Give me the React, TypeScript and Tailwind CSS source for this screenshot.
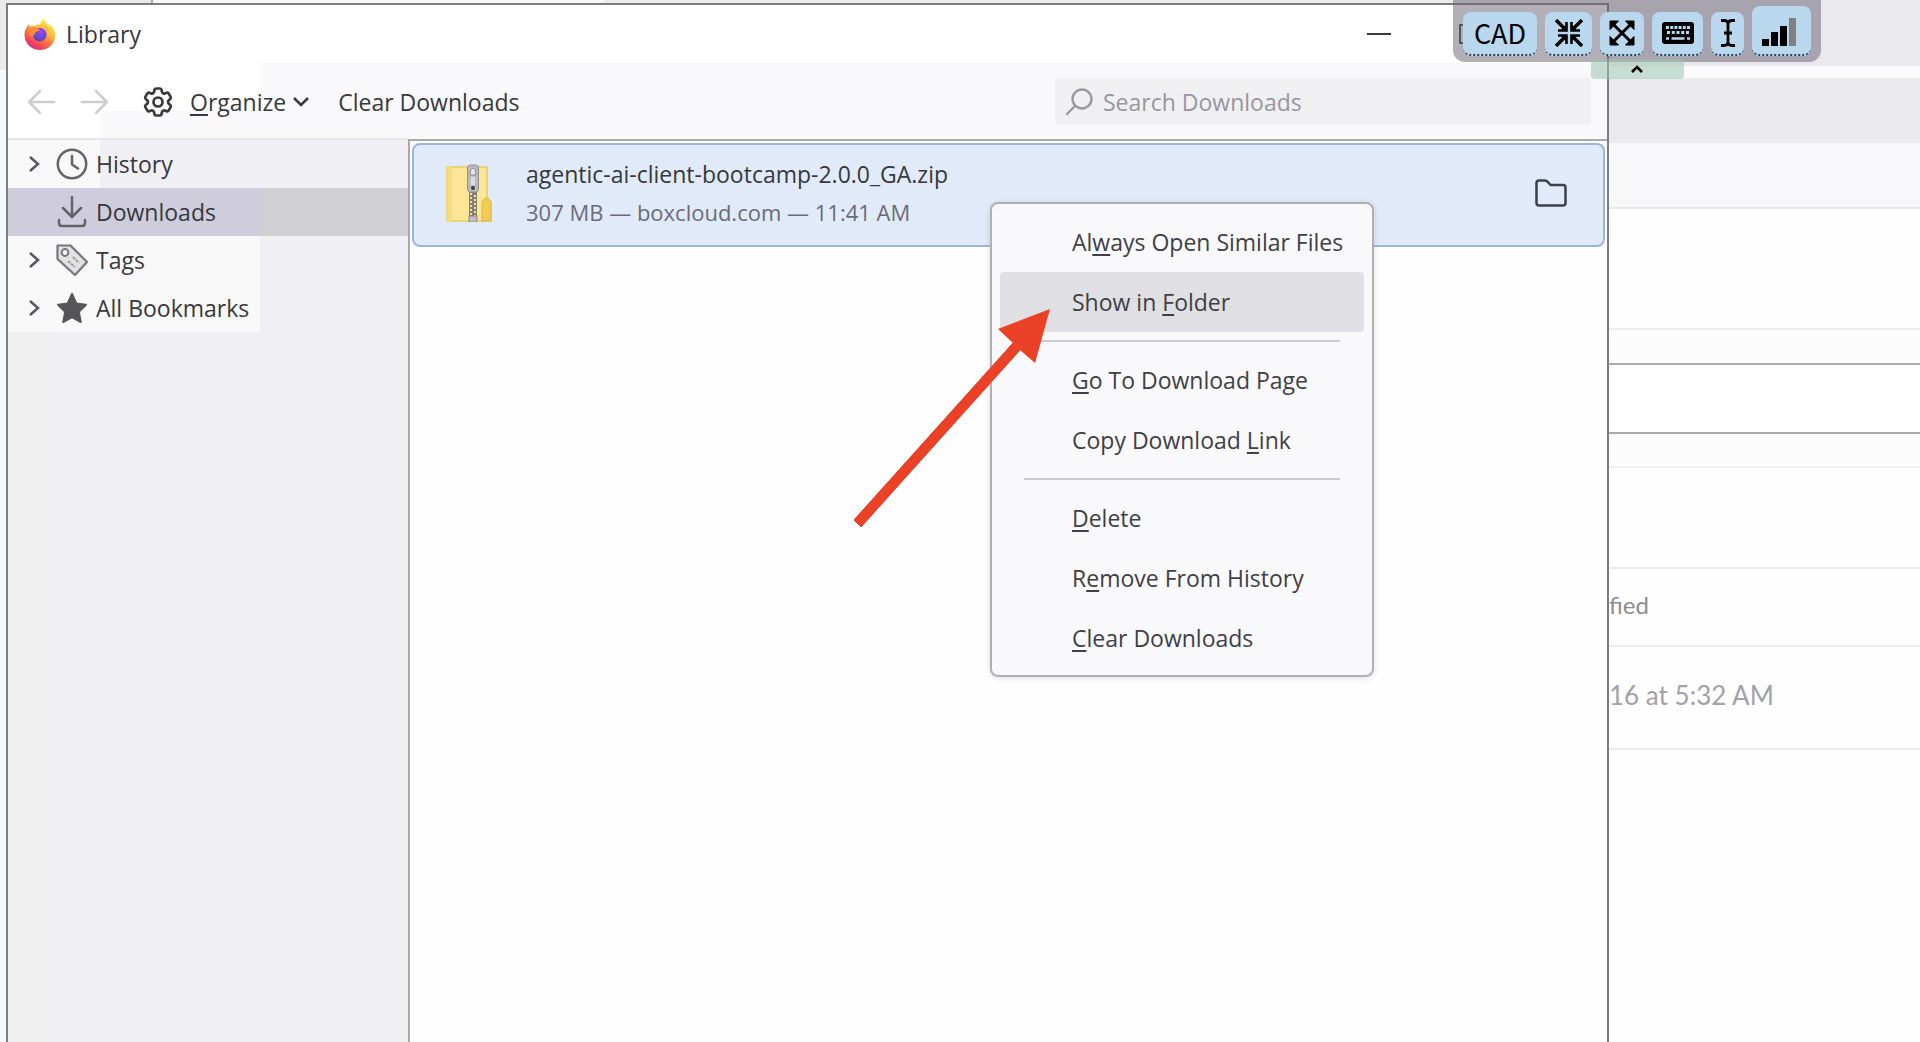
import type { ReactNode } from "react";
import { HiOutlineCog6Tooth } from "react-icons/hi2";

function FirefoxLogo() {
  return (
    <svg viewBox="0 0 32 32" className="size-8 shrink-0" aria-hidden="true">
      <defs>
        <linearGradient id="flame" x1="0.85" y1="0.05" x2="0.3" y2="1">
          <stop offset="0" stopColor="#fff36b" />
          <stop offset="0.35" stopColor="#ffc43c" />
          <stop offset="0.6" stopColor="#fb7a3c" />
          <stop offset="0.85" stopColor="#ee3f5c" />
          <stop offset="1" stopColor="#d9308a" />
        </linearGradient>
        <radialGradient id="globe" cx="0.6" cy="0.25" r="0.8">
          <stop offset="0" stopColor="#a044e6" />
          <stop offset="0.6" stopColor="#6a49dd" />
          <stop offset="1" stopColor="#4b3bb8" />
        </radialGradient>
      </defs>
      <path
        d="M4.5 6.5c.6 1 1.2 1.600 2 1.900 1.200-.6 2.600-.8 4-.4C12 6.600 14 6 16 6.200c.4-2.200 2-4.600 4.600-6.200-.2 2.700 1 4.300 3 6 .9-.1 1.300.6 1.700 1.400l1.500-.4c3 3.300 4.700 6.500 4.400 11-.5 8-7 14-15.200 14C7.500 32 .5 25.500.5 17.200c0-3.700 1-6.600 2.700-8.700.1-.8.600-1.500 1.300-2z"
        fill="url(#flame)"
      />
      <circle cx="15.800" cy="16.500" r="6.800" fill="url(#globe)" />
      <path d="M4 13c2.500-3.600 6-4 9.500-2.800 1.500.5 2.300 1.500 2 2.400-1 .9-3.200.9-4.200 2.200-1 1.400-.8 3.200-2.300 3.500C6.500 18.500 4.500 16 4 13z" fill="#fb8a3b" />
      <path d="M18 8.500c3.600.8 5.500 4 5 7.500 1.500-1 2-3.500 1.200-5.500-1.200-2-3.700-2.800-6.200-2z" fill="#ffb23e" />
    </svg>
  );
}

function ZipFolder() {
  return (
    <svg viewBox="0 0 46 58" className="h-[58px] w-[46px] shrink-0" aria-hidden="true">
      <path d="M1 3h40v31l4 5v18H1z" fill="#fbe596" stroke="#e9cb5c" strokeWidth="1.500" />
      <path d="M1 3h5v54H1z" fill="#f6dc7c" />
      <path d="M36 57V39c0-3 3-5 5-5s4 3 4 5v18z" fill="#f2cc58" stroke="#dfb63f" />
      <rect x="23" y="28" width="8" height="30" fill="#85826d" />
      <path d="M25 29v28M29 31v26" stroke="#e6dfb7" strokeWidth="2" strokeDasharray="2 2" />
      <rect x="21.500" y="1" width="11" height="27" rx="3" fill="#b9bbbd" stroke="#8f9193" />
      <path d="M24 11c0-9 6-9 6 0z" fill="#e6e7e8" stroke="#858789" />
      <rect x="25" y="13" width="4" height="8" fill="#dcdddf" />
      <circle cx="27" cy="24" r="2" fill="#3d3d3d" />
      <rect x="23" y="52" width="8" height="6" fill="#bfc0c0" stroke="#858585" />
    </svg>
  );
}

function Chevron() {
  return (
    <svg viewBox="0 0 12 18" className="h-[18px] w-3 shrink-0" fill="none" stroke="#56565c" strokeWidth="2.500" aria-hidden="true">
      <path d="M2 2l8 7-8 7" />
    </svg>
  );
}

function ClockIcon() {
  return (
    <svg viewBox="0 0 32 32" className="size-8 shrink-0" fill="none" stroke="#636368" strokeWidth="2.500" strokeLinecap="round" strokeLinejoin="round" aria-hidden="true">
      <circle cx="16" cy="16" r="14.200" />
      <path d="M16 8v8.500l6 4" />
    </svg>
  );
}

function DownloadIcon() {
  return (
    <svg viewBox="0 0 32 32" className="size-8 shrink-0" fill="none" stroke="#636368" strokeWidth="2.500" strokeLinecap="round" strokeLinejoin="round" aria-hidden="true">
      <path d="M16 1v19M7 12l9 9 9-9M3 24v3q0 3 3 3h20q3 0 3-3v-3" />
    </svg>
  );
}

function TagIcon() {
  return (
    <svg viewBox="0 0 32 32" className="size-8 shrink-0" strokeLinejoin="round" aria-hidden="true">
      <path d="M1.500 1.500h13L31 18 19 31 1.500 15z" fill="#e2e2e3" stroke="#77777b" strokeWidth="2.200" />
      <circle cx="9" cy="8.500" r="3.400" fill="#f8f8f8" stroke="#77777b" strokeWidth="2" />
      <path d="M17 13l6 6M12 17l7 6" stroke="#99999c" strokeWidth="1.800" strokeDasharray="3 1" />
    </svg>
  );
}

function StarIcon() {
  return (
    <svg viewBox="0 0 32 32" className="size-8 shrink-0" aria-hidden="true">
      <path d="M16 2l4.300 9.400L30 12.700l-7.200 7.200L24.800 30 16 25.200 7.200 30l2-10.100L2 12.700l9.700-1.300z" fill="#55555a" stroke="#55555a" strokeWidth="2" strokeLinejoin="round" />
    </svg>
  );
}

function NavArrow({ forward = false }: { forward?: boolean }) {
  return (
    <svg viewBox="0 0 28 26" className="h-[26px] w-7" fill="none" stroke="#cdcdd0" strokeWidth="2.500" strokeLinecap="round" strokeLinejoin="round" aria-hidden="true">
      <path d={forward ? "M2 13h24M16 2l11 11-11 11" : "M26 13H2M12 2L1 13l11 11"} />
    </svg>
  );
}

function TreeRow({ icon, label, open = true, className }: { icon: ReactNode; label: string; open?: boolean; className: string }) {
  return (
    <li className={className}>
      <button type="button" className="flex h-12 w-full items-center pl-5 text-left">
        <span className="flex w-7 shrink-0">{open && <Chevron />}</span>
        {icon}
        <span className="pl-2">{label}</span>
      </button>
    </li>
  );
}

function MenuItem({ pre = "", hot, post, active = false }: { pre?: string; hot: string; post: string; active?: boolean }) {
  return (
    <button
      type="button"
      role="menuitem"
      className={
        active
          ? "flex h-[60px] items-center rounded-sm bg-[#e0dfe3] pl-[72px] text-left"
          : "flex h-[60px] items-center pl-[72px] text-left"
      }
    >
      <span className="whitespace-pre">
        {pre}
        <span className="underline decoration-2 underline-offset-3">{hot}</span>
        {post}
      </span>
    </button>
  );
}

function Separator() {
  return <div role="separator" className="mx-6 my-2 h-0.5 bg-[#cbcbcd]" />;
}

function ContextMenu() {
  return (
    <div
      role="menu"
      aria-label="Download actions"
      className="absolute top-[202px] left-[990px] z-10 flex w-[384px] flex-col rounded-lg border-2 border-[#b0b0b2] bg-[#f9f9fb] px-2 pt-2 pb-[7px] text-[#3f3f46] shadow-[0_1px_6px_rgba(0,0,0,0.12)]"
    >
      <MenuItem pre="Al" hot="w" post="ays Open Similar Files" />
      <MenuItem pre="Show in " hot="F" post="older" active />
      <Separator />
      <MenuItem hot="G" post="o To Download Page" />
      <MenuItem pre="Copy Download " hot="L" post="ink" />
      <Separator />
      <MenuItem hot="D" post="elete" />
      <MenuItem pre="R" hot="e" post="move From History" />
      <MenuItem hot="C" post="lear Downloads" />
    </div>
  );
}

function PointerArrow() {
  return (
    <svg viewBox="0 0 196 218" className="pointer-events-none absolute top-[309px] left-[854px] z-20 h-[218px] w-[196px]" aria-hidden="true">
      <path d="M196 0L144 20l15 14L0 211l7 7L166 41l15 13z" fill="#eb4127" />
      <path d="M0 211l7 7L166 41l-7-7z" fill="#eb4127" stroke="#eb4127" strokeWidth="1" />
    </svg>
  );
}

function RemoteKey({ label, className, children }: { label: string; className: string; children: ReactNode }) {
  return (
    <button type="button" aria-label={label} className={`flex items-center justify-center rounded-lg border-b-2 border-dotted border-[#2c4459] bg-[#b9d8ee] text-black ${className}`}>
      {children}
    </button>
  );
}

function RemoteBar() {
  return (
    <div className="absolute top-0 right-[99px] z-30 flex flex-col items-center">
      <div className="flex h-[62px] items-end gap-2 rounded-b-xl bg-[#66607080] px-2.5 pb-1.5">
        <RemoteKey label="CAD" className="h-11 w-[74px] font-['Noto_Sans_CJK_JP',sans-serif] text-[27px]">
          CAD
        </RemoteKey>
        <RemoteKey label="Shrink" className="h-11 w-[47px]">
          <svg viewBox="0 0 28 28" className="size-7" fill="none" stroke="#000" strokeWidth="3.400" aria-hidden="true">
            <path d="M1 1l9 9M27 1l-9 9M1 27l9-9M27 27l-9-9" />
            <path d="M11.500 3v8.500H3M16.500 3v8.500H25M3 16.500h8.500V25M25 16.500h-8.500V25" strokeWidth="2.600" />
            <path d="M12 5v7H5zM16 5v7h7zM5 16h7v7zM23 16h-7v7z" fill="#000" stroke="none" />
          </svg>
        </RemoteKey>
        <RemoteKey label="Full screen" className="h-11 w-11">
          <svg viewBox="0 0 26 26" className="size-[26px]" aria-hidden="true">
            <path d="M4 4l18 18M22 4L4 22" stroke="#000" strokeWidth="3" />
            <path d="M1 1h8.500L1 9.500zM25 1h-8.500L25 9.500zM1 25h8.500L1 16.500zM25 25h-8.500l8.500-8.500z" stroke="#000" strokeLinejoin="round" />
          </svg>
        </RemoteKey>
        <RemoteKey label="Keyboard" className="h-11 w-[51px]">
          <svg viewBox="0 0 32 22" className="h-[22px] w-8" aria-hidden="true">
            <rect width="32" height="22" rx="3" />
            <path d="M4 5.500h24" stroke="#b9d8ee" strokeWidth="3" strokeDasharray="3 1.200" />
            <path d="M5 10.500h22" stroke="#b9d8ee" strokeWidth="3" strokeDasharray="3 1.750" />
            <path d="M4 16.500h3M9.500 16.500h13M25 16.500h3" stroke="#b9d8ee" strokeWidth="2.500" />
          </svg>
        </RemoteKey>
        <RemoteKey label="Text cursor" className="h-11 w-[33px]">
          <svg viewBox="0 0 16 28" className="h-7 w-4" fill="none" stroke="#000" strokeWidth="2.800" aria-hidden="true">
            <path d="M1 1.500h3q4 0 4 4v17q0 4-4 4H1M15 1.500h-3q-4 0-4 4v17q0 4 4 4h3M4 14h8" />
          </svg>
        </RemoteKey>
        <RemoteKey label="Connection" className="h-[50px] w-[59px]">
          <svg viewBox="0 0 34 28" className="mt-1 mr-1.5 h-7 w-[34px]" aria-hidden="true">
            <path d="M0 21h7v7H0zM9 14h7v14H9zM18 8h7v20h-7z" />
            <path d="M27 0h7v28h-7z" fill="#808080" />
          </svg>
        </RemoteKey>
      </div>
      <button type="button" aria-label="Collapse toolbar" className="-mt-[3px] flex h-5 w-[93px] items-center justify-center rounded bg-[#9dc4b28c]">
        <svg viewBox="0 0 12 8" className="h-2 w-3" fill="none" stroke="#000" strokeWidth="2.600" aria-hidden="true">
          <path d="M1 7l5-5 5 5" />
        </svg>
      </button>
    </div>
  );
}

function PageBehind() {
  return (
    <aside className="flex w-[311px] shrink-0 flex-col bg-[#fefefe] font-['Lato',sans-serif] text-2xl">
      <div className="h-[66px] bg-[#eae9ed]" />
      <div className="h-3 bg-[#fbfbfb]" />
      <div className="h-[65px] bg-[#ebebed]" />
      <div className="h-[66px] border-b-2 border-[#e8e8e8] bg-[#f8f8fa]" />
      <div className="h-[119px]" />
      <div className="h-[35px] border-t-2 border-[#ececec] bg-[#fcfcfc]" />
      <div className="h-[71px] border-y-2 border-[#aaaaaa] bg-white" />
      <div className="h-[34px] border-b-2 border-[#f0f0f0] bg-[#fcfcfc]" />
      <div className="h-[101px] border-b-2 border-[#ececec]" />
      <div className="flex h-[78px] items-center border-b-2 border-[#ececec] pb-1 text-[#8b8c90]">fied</div>
      <div className="flex h-[103px] items-center border-b-2 border-[#ececec] pb-1 text-[26px] text-[#a1a2a8]">16 at 5:32 AM</div>
    </aside>
  );
}

export default function App() {
  return (
    <div className="relative flex min-h-screen overflow-hidden bg-[#f4f4f6] font-['Open_Sans','Noto_Sans',sans-serif] text-[23px] leading-8 text-[#38383d]">
      <div className="flex w-1.5 shrink-0 flex-col">
        <div className="h-[70px] bg-[#e8ecec]" />
        <div className="flex-1 bg-[#f1fafd]" />
      </div>

      <div className="flex min-w-0 flex-1 flex-col">
        <div className="flex h-[3px]">
          <div className="w-[147px] border-r-2 border-[#a5a5a5] bg-[#e8e8e8]" />
          <div className="w-[452px] bg-[#f8f8f8]" />
          <div className="flex-1 bg-[#ebebee]" />
        </div>
        <main className="flex flex-1 flex-col border-2 border-b-0 border-[#7d7d7d] bg-white">
          <header className="flex h-[58px] items-center pl-4">
            <FirefoxLogo />
            <h1 className="flex-1 pl-2.5">Library</h1>
            <button type="button" aria-label="Minimize" className="mr-[68px] h-0.5 w-6 bg-[#3a3a3a]" />
            <button type="button" aria-label="Maximize" className="mr-32 size-5 border-2 border-[#4a4a55]" />
          </header>

          <div
            role="toolbar"
            aria-label="Library"
            className="flex h-[75px] items-center bg-[#f9f9fb] bg-[linear-gradient(white,white),linear-gradient(white,white)] bg-[length:252px_48px,92px_100%] bg-no-repeat pt-0.5 pr-4 pl-5"
          >
            <button type="button" aria-label="Back">
              <NavArrow />
            </button>
            <button type="button" aria-label="Forward" className="ml-6">
              <NavArrow forward />
            </button>
            <button type="button" className="ml-8 flex items-center">
              <HiOutlineCog6Tooth className="size-9" strokeWidth={1.8} />
              <span className="ml-3.5">
                <span className="underline decoration-2 underline-offset-3">O</span>rganize
              </span>
              <svg viewBox="0 0 18 11" className="ml-1.5 h-[11px] w-[18px]" fill="none" stroke="currentColor" strokeWidth="2.500" aria-hidden="true">
                <path d="M2 2l7 7 7-7" />
              </svg>
            </button>
            <button type="button" className="ml-7">
              Clear Downloads
            </button>
            <label className="ml-auto flex h-[47px] w-[536px] items-center rounded bg-[#f0f0f3] pl-2.5">
              <svg viewBox="0 0 28 28" className="size-7 shrink-0" fill="none" stroke="#9b9b9f" strokeWidth="2.400" strokeLinecap="round" aria-hidden="true">
                <circle cx="17" cy="11" r="9.500" />
                <path d="M10 18l-8 8" />
              </svg>
              <input type="text" aria-label="Search Downloads" placeholder="Search Downloads" className="ml-2.5 min-w-0 flex-1 bg-transparent outline-none placeholder:text-[#97979c]" />
            </label>
          </div>

          <div className="flex flex-1">
            <nav aria-label="Places" className="w-[400px] shrink-0 border-t-2 border-[#e6e6e9] bg-linear-to-r from-[#efefef] from-[30px] to-[#efeff4] to-[50px]">
              <ul>
                <TreeRow icon={<ClockIcon />} label="History" className="bg-linear-to-r from-[#f8f8f8] from-[92px] to-[#efeff4] to-[92px]" />
                <TreeRow icon={<DownloadIcon />} label="Downloads" open={false} className="bg-linear-to-r from-[#cfcddc] from-[252px] to-[#d0cfd4] to-[252px]" />
                <TreeRow icon={<TagIcon />} label="Tags" className="bg-linear-to-r from-[#f8f8f8] from-[252px] to-[#efeff4] to-[252px]" />
                <TreeRow icon={<StarIcon />} label="All Bookmarks" className="bg-linear-to-r from-[#f8f8f8] from-[252px] to-[#efeff4] to-[252px]" />
              </ul>
            </nav>

            <section aria-label="Downloads" className="mt-px min-w-0 flex-1 border-t-2 border-l-2 border-[#a9a9a9] bg-[#fefefe] p-0.5">
              <div className="flex h-[104px] items-center rounded-lg border-2 border-[#9bb5dd] bg-[#e0eaf9] pr-9 pb-1 pl-8">
                <ZipFolder />
                <div className="flex min-w-0 flex-1 flex-col gap-1.5 pl-[34px]">
                  <p className="truncate">agentic-ai-client-bootcamp-2.0.0_GA.zip</p>
                  <p className="truncate text-[22px] text-[#6c6c78]">307 MB — boxcloud.com — 11:41 AM</p>
                </div>
                <button type="button" aria-label="Show in Folder">
                  <svg viewBox="0 0 32 28" className="h-7 w-8" fill="none" stroke="#3f3f47" strokeWidth="2.500" strokeLinejoin="round" aria-hidden="true">
                    <path d="M1.500 24V4q0-2.500 2.500-2.500h6q1.500 0 2.500 1.200L15.500 6H28q2.500 0 2.500 2.500V24q0 2.500-2.500 2.500H4q-2.500 0-2.500-2.500z" />
                  </svg>
                </button>
              </div>
            </section>
          </div>
        </main>
      </div>

      <PageBehind />
      <ContextMenu />
      <PointerArrow />
      <RemoteBar />
    </div>
  );
}
